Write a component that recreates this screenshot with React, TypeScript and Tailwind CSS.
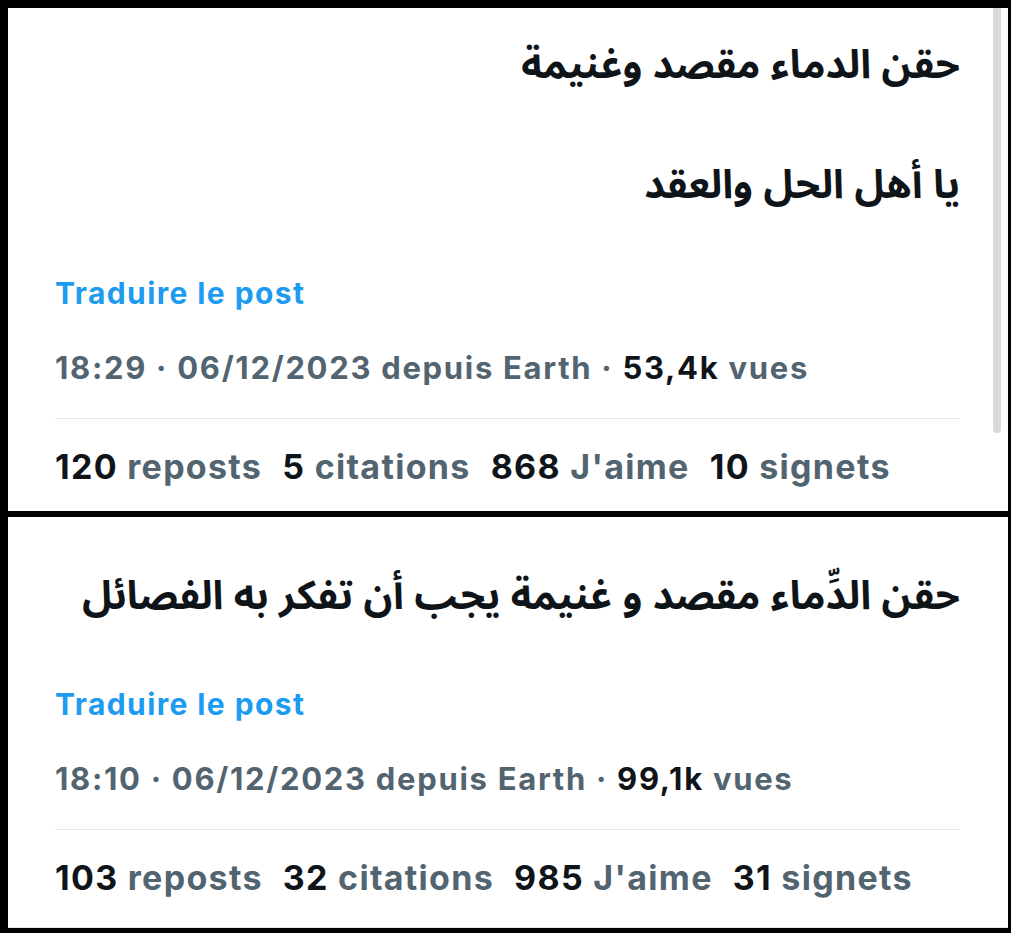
import * as React from "react"

type Post = {
  lines: string[]
  time: string
  views: string
  stats: [string, string][]
}

const posts: Post[] = [
  {
    lines: ["حقن الدماء مقصد وغنيمة", "", "يا أهل الحل والعقد"],
    time: "18:29 · 06/12/2023 depuis Earth · ",
    views: "53,4k",
    stats: [
      ["120", "reposts"],
      ["5", "citations"],
      ["868", "J'aime"],
      ["10", "signets"],
    ],
  },
  {
    lines: ["حقن الدِّماء مقصد و غنيمة يجب أن تفكر به الفصائل"],
    time: "18:10 · 06/12/2023 depuis Earth · ",
    views: "99,1k",
    stats: [
      ["103", "reposts"],
      ["32", "citations"],
      ["985", "J'aime"],
      ["31", "signets"],
    ],
  },
]

const latin = "font-['Inter','Liberation_Sans',sans-serif]"
const arabic = "font-['Noto_Sans_Arabic','DejaVu_Sans',sans-serif]"

function PostBody({ post, first }: { post: Post; first: boolean }) {
  return (
    <div className={`relative bg-white pl-[47px] pr-[48px] ${first ? "h-[503px] pt-[28px]" : "h-[411px] pt-[50px] border-b border-[#e7e9ea]"}`}>
      {first && (
        <div className="absolute right-[7px] top-0 w-[8px] h-[425px] bg-[#d9d9d9] rounded-b-full" />
      )}
      <div dir="rtl" className={`${arabic} text-right text-[40px] font-bold leading-[60px] text-[#0f1419]`}>
        {post.lines.map((l, i) => (
          <div key={i} className="h-[60px] whitespace-nowrap">{l}</div>
        ))}
      </div>

      <div className={`${latin} mt-[57px] text-[30px] font-bold leading-[40px] text-[#1d9bf0] tracking-[1.4px]`}>
        Traduire le post
      </div>

      <div className={`${latin} mt-[35px] text-[31px] font-bold leading-[40px] text-[#536471] tracking-[1.7px] whitespace-nowrap`}>
        {post.time}
        <span className="text-[#0f1419]">{post.views}</span> vues
      </div>

      <div className="mt-[30px] h-px bg-[#e7e9ea]" />

      <div className={`${latin} mt-[28px] flex gap-[20px] text-[34px] font-bold leading-[40px] tracking-[1.3px] whitespace-nowrap`}>
        {post.stats.map(([n, label]) => (
          <span key={label}>
            <span className="text-[#0f1419]">{n}</span>{" "}
            <span className="text-[#536471]">{label}</span>
          </span>
        ))}
      </div>
    </div>
  )
}

export default function App() {
  return (
    <div className="w-[1011px] h-[933px] bg-black pt-[8px] pl-[8px] pr-[3px] pb-[5px] flex flex-col gap-[6px]">
      <PostBody post={posts[0]} first />
      <PostBody post={posts[1]} first={false} />
    </div>
  )
}
